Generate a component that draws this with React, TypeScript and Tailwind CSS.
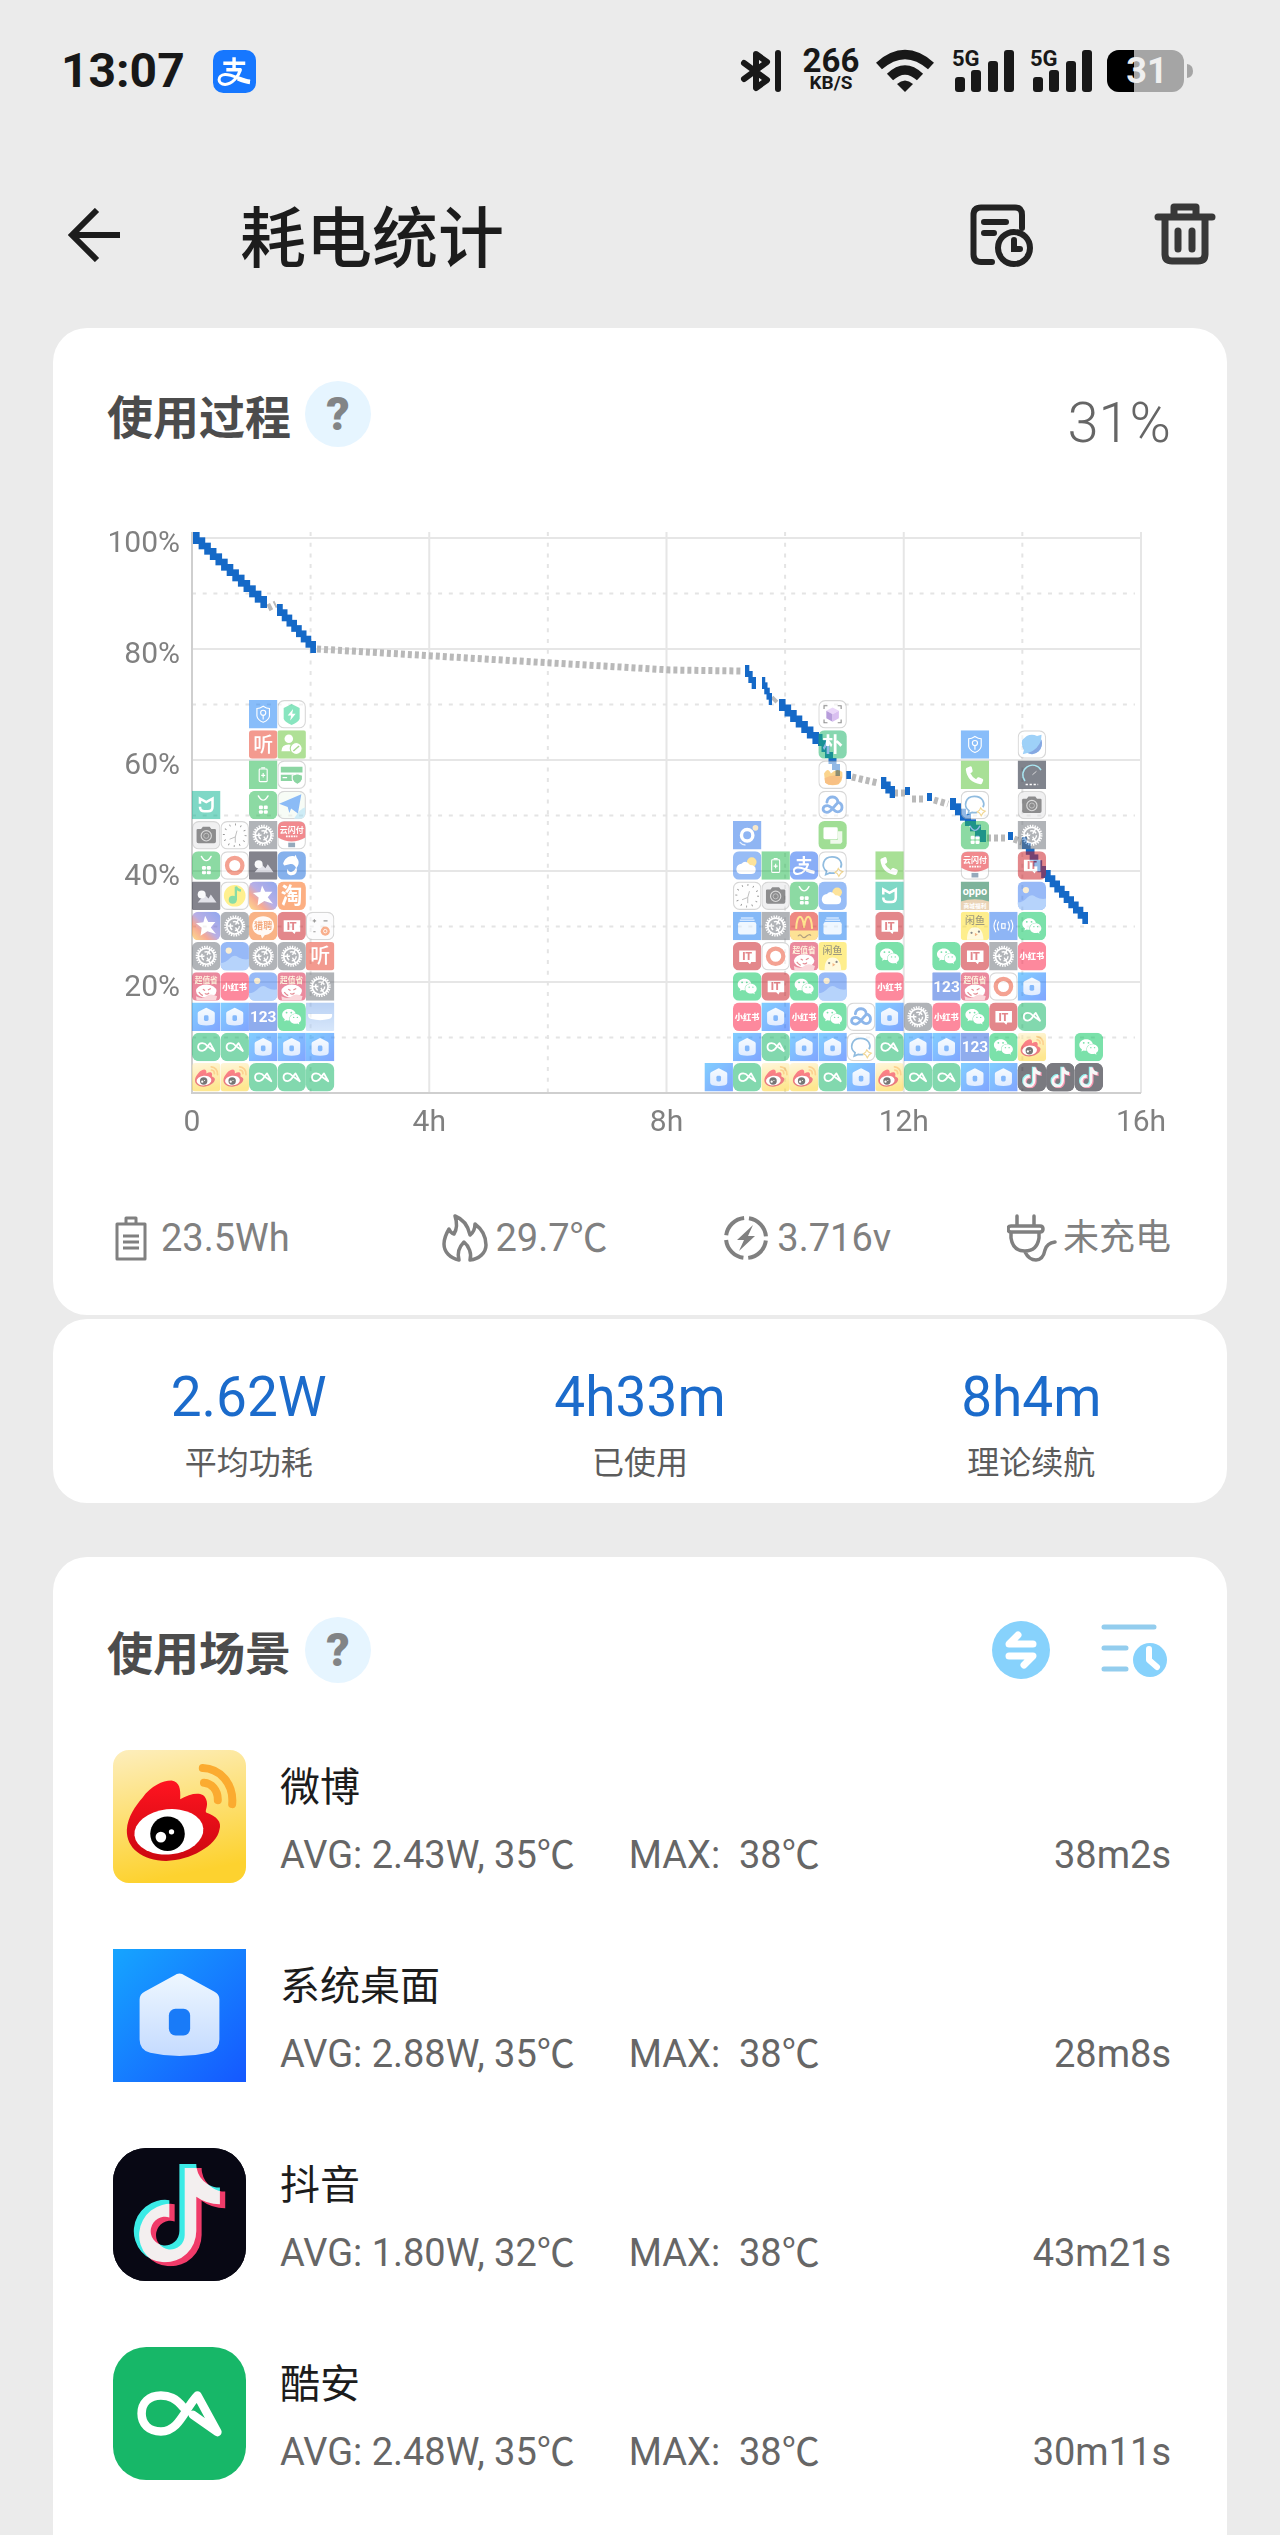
import React from "react";
import { FaTiktok, FaWeixin, FaPhone } from "react-icons/fa6";

const CJK = "'Noto Sans CJK SC', sans-serif";

/* ---------- App icons, all drawn in a 100 x 100 box ---------- */

type Box = { r?: number; fill: string; ring?: boolean; children?: React.ReactNode };

function Tile({ r = 22, fill, ring, children }: Box) {
  return (
    <>
      <rect x={ring ? 2 : 0} y={ring ? 2 : 0} width={ring ? 96 : 100} height={ring ? 96 : 100} rx={r} fill={fill} stroke={ring ? "#b4b4b4" : "none"} strokeWidth={ring ? 4 : 0} />
      {children}
    </>
  );
}

function Word({ t, size, y, x = 50, fill = "#fff", weight = 700 }: { t: string; size: number; y: number; x?: number; fill?: string; weight?: number }) {
  return (
    <text x={x} y={y} fontSize={size} fontWeight={weight} fill={fill} textAnchor="middle" fontFamily={"Roboto, " + CJK}>
      {t}
    </text>
  );
}

function Gear({ r }: { r: number }) {
  return (
    <Tile fill="#6f747c" r={r}>
      <circle cx="50" cy="50" r="33" fill="none" stroke="#fff" strokeWidth="8" strokeDasharray="4.6 4.04" />
      <circle cx="50" cy="50" r="28" fill="none" stroke="#fff" strokeWidth="6" />
      <circle cx="50" cy="50" r="16" fill="none" stroke="#fff" strokeWidth="5" strokeDasharray="24 9.5" />
      <path d="M50 50L64 74M50 50L22 50M50 50L64 26" stroke="#fff" strokeWidth="5" />
      <circle cx="50" cy="50" r="6" fill="#6f747c" />
    </Tile>
  );
}

function AlipayGlyph() {
  return (
    <g fill="none" stroke="#fff" strokeWidth="8">
      <path d="M24 31H75M49 17V46M31 46H66" />
      <path d="M64 44C60 62 44 80 28 80C10 80 9 58 28 57C46 56 62 70 86 74" strokeWidth="7" />
      <path d="M58 66C68 70 76 73 86 74" strokeWidth="11" />
    </g>
  );
}

function BatteryGlyph() {
  return (
    <g fill="none" stroke="#fff" strokeWidth="4">
      <rect x="36" y="30" width="28" height="44" rx="3" />
      <path d="M43 26H57M50 44V60M43 52H57" />
    </g>
  );
}

const ICONS: Record<string, React.ReactNode> = {
  weibo: (
    <Tile fill="url(#gWeibo)" r={12}>
      <path d="M10.4 60C11 50 17 42 22 36C29 27 37 23 44 23C50 24 51 29 50.5 37C59 32 68 31 70 37C72 42 69 45 70 47C78 50 82 54 80 60C78 72 58 83 40 83.4C22 83 10 74 10.4 60Z" fill="url(#gRed)" />
      <ellipse cx="42" cy="61.5" rx="26" ry="17" fill="#fff" transform="rotate(-6 42 61.5)" />
      <circle cx="41" cy="63" r="13" fill="#000" />
      <circle cx="36" cy="65.500" r="4" fill="#fff" />
      <circle cx="44" cy="61.500" r="2" fill="#fff" />
      <path d="M67.500 13.600C80 14 91 25 89.600 40.700M68.400 24.600C74 25 79 30 78.800 37.700" fill="none" stroke="#fbab30" strokeWidth="6" strokeLinecap="round" />
    </Tile>
  ),
  home: (
    <Tile fill="url(#gHome)" r={0}>
      <path d="M46 20Q50 17 54 20L76 32Q80 34 80 38V68Q80 76 72 78Q50 83 28 78Q20 76 20 68V38Q20 34 24 32Z" fill="url(#gHouse)" />
      <rect x="42" y="45" width="16" height="20" rx="5" fill="#197bf8" />
    </Tile>
  ),
  tiktok: (
    <Tile fill="#080814" r={25}>
      <g className="isolate">
        <rect width="100" height="100" rx="25" fill="#080814" />
        <FaTiktok x="11" y="12" size="74" color="#35eae4" className="mix-blend-screen" />
        <FaTiktok x="15" y="15" size="74" color="#f0355c" className="mix-blend-screen" />
      </g>
    </Tile>
  ),
  ca: (
    <Tile fill="#17b768" r={25}>
      <path d="M53 45.500C47 38 42 36.500 36 36.500C27 36.500 21.500 42 21.500 50C21.500 58 27 63.500 36 63.500C50 63.500 54 46 63.500 36.500L78.500 64L60 51" fill="none" stroke="#fff" strokeWidth="6.400" strokeLinecap="round" strokeLinejoin="round" />
    </Tile>
  ),
  promo: (
    <Tile fill="#d8264c" r={16}>
      <Word t="超值省" size={27} y={37} fill="#ffe9c0" />
      <ellipse cx="50" cy="66" rx="36" ry="23" fill="#fff" />
      <path d="M14 84Q36 96 50 84T88 84L84 98H16Z" fill="#f6b5bd" />
      <path d="M38 60L46 64M56 62L66 57M45 74Q53 80 60 72M24 70Q30 78 38 82" stroke="#c23" strokeWidth="4" fill="none" />
    </Tile>
  ),
  gear: <Gear r={20} />,
  gearSq: <Gear r={0} />,
  star: (
    <Tile fill="url(#gStar)">
      <path d="M46 14L57 36L82 36L66 55L84 78L54 68L30 84L34 56L14 40L40 37Z" fill="#fff" />
    </Tile>
  ),
  mountain: (
    <Tile fill="#1a1a2c" r={4}>
      <path d="M20 74L44 46L58 60L66 46L86 74Z" fill="#c9c9d6" />
      <circle cx="34" cy="46" r="14" fill="#f5f5f8" />
    </Tile>
  ),
  store: (
    <Tile fill="#29bb55">
      <path d="M33 18Q50 48 67 18" fill="none" stroke="#fff" strokeWidth="5" strokeLinecap="round" />
      <g fill="#fff">
        <rect x="35" y="52" width="14" height="13" rx="4" />
        <rect x="52" y="52" width="14" height="13" rx="4" />
        <rect x="35" y="68" width="14" height="13" rx="4" />
        <rect x="52" y="68" width="14" height="13" rx="4" />
      </g>
    </Tile>
  ),
  camera: (
    <Tile fill="#e4e4e6" ring>
      <path d="M16 32Q16 28 20 28H32L38 20H62L68 28H80Q84 28 84 32V72Q84 78 78 78H22Q16 78 16 72Z" fill="#2b2b2e" />
      <circle cx="50" cy="52" r="18" fill="none" stroke="#bbb" strokeWidth="4" />
      <circle cx="50" cy="52" r="9" fill="none" stroke="#999" strokeWidth="3" />
    </Tile>
  ),
  mi: (
    <Tile fill="#12b795" r={0}>
      <path d="M28 46V28L50 40L72 28V56Q72 72 56 72H44Q28 72 28 56" fill="none" stroke="#fff" strokeWidth="9" />
    </Tile>
  ),
  xhs: (
    <Tile fill="#fb2449">
      <Word t="小红书" size={29} y={61} weight={900} />
    </Tile>
  ),
  gallery: (
    <Tile fill="#3f7df0">
      <path d="M0 74Q18 74 34 56Q50 42 64 54Q82 64 100 60V80Q98 100 78 100H22Q2 100 0 78Z" fill="#78aef8" />
      <circle cx="29" cy="30" r="11" fill="#f5dfae" />
    </Tile>
  ),
  music: (
    <Tile fill="#fbfbfb" ring>
      <circle cx="50" cy="50" r="38" fill="#ffe32e" />
      <circle cx="43" cy="64" r="14" fill="#22c05c" />
      <path d="M54 66V18Q58 30 72 32" stroke="#22c05c" strokeWidth="8" fill="none" />
    </Tile>
  ),
  ring: (
    <Tile fill="#fff" ring>
      <circle cx="50" cy="50" r="27" fill="none" stroke="#ea5335" strokeWidth="15" />
    </Tile>
  ),
  clock: (
    <Tile fill="#fdfdfd" ring>
      <circle cx="50" cy="50" r="38" fill="none" stroke="#333" strokeWidth="7" strokeDasharray="3 16.900" />
      <path d="M58 34L52 56V76M52 56L32 64" fill="none" stroke="#777" strokeWidth="3" />
    </Tile>
  ),
  boss: (
    <Tile fill="#f4731f">
      <path d="M50 16C72 16 88 30 88 50C88 68 74 80 56 82L46 94L42 82C24 80 12 68 12 50C12 30 28 16 50 16Z" fill="#fff6ee" />
      <Word t="猎聘" size={32} y={61} fill="#ee6a1c" />
    </Tile>
  ),
  battery: (
    <Tile fill="#27ba52" r={0}>
      <BatteryGlyph />
    </Tile>
  ),
  listen: (
    <Tile fill="#e8432f" r={12}>
      <Word t="听" size={70} y={75} weight={500} />
    </Tile>
  ),
  shield: (
    <Tile fill="#2385f6" r={0}>
      <path d="M50 22Q62 30 72 30V56Q70 70 50 78Q30 70 28 56V30Q38 30 50 22Z" fill="none" stroke="#fff" strokeWidth="4" />
      <circle cx="50" cy="45" r="9" fill="none" stroke="#fff" strokeWidth="4" />
      <path d="M50 54V68" stroke="#fff" strokeWidth="4" />
    </Tile>
  ),
  wechat: (
    <Tile fill="#0ac762">
      <FaWeixin x="15" y="15" size="70" color="#fff" />
    </Tile>
  ),
  it: (
    <Tile fill="#cb2028">
      <path d="M22 30H80V70H64L60 78L52 70H22Z" fill="#fff" />
      <Word t="IT" size={38} y={64} fill="#cb2028" weight={900} />
    </Tile>
  ),
  taobao: (
    <Tile fill="#fa6b18">
      <Word t="淘" size={76} y={77} />
    </Tile>
  ),
  dolphin: (
    <Tile fill="#1f6fdc">
      <path d="M20 44C24 24 44 12 60 18L64 12L68 24C78 34 76 50 66 60C62 48 52 42 42 46L24 50Z" fill="#fff" />
      <path d="M66 56C74 72 62 84 50 84C36 84 30 74 36 62C38 74 52 76 60 66Z" fill="#fff" />
    </Tile>
  ),
  pay: (
    <Tile fill="#fff" ring>
      <path d="M2 24Q2 2 24 2H76Q98 2 98 24V58Q50 86 2 58Z" fill="#e5252d" />
      <Word t="云闪付" size={28} y={41} />
      <path d="M30 54H70" stroke="#fff" strokeWidth="6" strokeDasharray="6 3" />
      <rect x="38" y="76" width="24" height="16" fill="#3a5f80" />
    </Tile>
  ),
  plane: (
    <Tile fill="#f1f9ef" ring>
      <path d="M58 98Q80 62 98 58V76Q98 98 78 98Z" fill="#a5dcef" />
      <path d="M6 46L84 12L72 80L48 62L42 78L36 57Z" fill="#2880ee" />
    </Tile>
  ),
  card: (
    <Tile fill="#fff" ring>
      <path d="M12 22H88V42H12ZM12 50H60V72H12Z" fill="#27b152" />
      <path d="M18 60H34" stroke="#fff" strokeWidth="4" />
      <path d="M70 46L88 52V66Q84 78 70 84Q56 78 52 66V52Z" fill="#27b152" stroke="#fff" strokeWidth="4" />
    </Tile>
  ),
  person: (
    <Tile fill="#6bc53c" r={8}>
      <circle cx="40" cy="30" r="15" fill="#fff" />
      <path d="M14 74Q14 50 40 50Q60 50 62 74Z" fill="#fff" />
      <circle cx="66" cy="64" r="21" fill="#fff" stroke="#6bc53c" strokeWidth="4" />
      <path d="M56 73L76 55" stroke="#5ab52c" strokeWidth="5" />
    </Tile>
  ),
  bolt: (
    <Tile fill="#fff" ring>
      <path d="M50 14L78 28V66Q74 78 50 88Q26 78 22 66V28Z" fill="#22cf88" />
      <path d="M55 32L36 54H48L45 72L64 48H52Z" fill="#fff" />
    </Tile>
  ),
  water: (
    <Tile fill="url(#gWater)" r={4}>
      <path d="M8 40H92Q94 56 80 58Q50 66 20 58Q6 56 8 40Z" fill="#fff" />
    </Tile>
  ),
  calc: (
    <Tile fill="#fafafb" ring>
      <path d="M24 32H36M30 26V38M62 32H76M26 70H34" stroke="#444" strokeWidth="4" />
      <circle cx="68" cy="68" r="16" fill="#f26a2c" />
      <circle cx="68" cy="68" r="6" fill="none" stroke="#fff" strokeWidth="3" />
    </Tile>
  ),
  n123: (
    <Tile fill="#2f66dd" r={4}>
      <Word t="123" size={54} y={69} />
    </Tile>
  ),
  files: (
    <Tile fill="#1c7df0" r={0}>
      <path d="M28 22H72M24 30H76" stroke="#a9d0ff" strokeWidth="5" />
      <rect x="18" y="36" width="64" height="44" rx="8" fill="#e2f1ff" />
    </Tile>
  ),
  weather: (
    <Tile fill="#3e83ee">
      <circle cx="66" cy="38" r="17" fill="#fccb45" />
      <path d="M30 80Q12 80 12 62Q14 46 30 44Q44 28 60 48Q80 48 80 64Q80 80 64 80Z" fill="#fff" />
    </Tile>
  ),
  lens: (
    <Tile fill="#2f76e8" r={0}>
      <circle cx="50" cy="50" r="20" fill="none" stroke="#fff" strokeWidth="12" />
      <path d="M24 74Q32 84 44 84" stroke="#cfe2ff" strokeWidth="5" fill="none" />
      <circle cx="79" cy="24" r="10" fill="#f0d59b" />
    </Tile>
  ),
  mcd: (
    <Tile fill="#df2419">
      <path d="M0 66H100V78Q98 100 78 100H22Q2 100 0 78Z" fill="#fcc93a" />
      <path d="M22 60C24 4 46 4 50 56C54 4 76 4 78 60" fill="none" stroke="#ffcb2e" strokeWidth="7" />
      <path d="M28 86Q36 76 42 86T58 86T74 84" stroke="#6b4a10" strokeWidth="4" fill="none" />
    </Tile>
  ),
  alipay: (
    <Tile fill="#2668f0">
      <AlipayGlyph />
    </Tile>
  ),
  fish: (
    <Tile fill="#fde02c" r={12}>
      <Word t="闲鱼" size={35} y={42} fill="#4a4210" weight={500} />
      <path d="M22 98Q22 54 50 54Q78 54 80 98Z" fill="#fff6c2" />
      <path d="M50 74L60 80L50 86Z" fill="#e8761c" />
      <circle cx="38" cy="74" r="4" fill="#222" />
      <circle cx="64" cy="70" r="4" fill="#222" />
    </Tile>
  ),
  bubble: (
    <Tile fill="#fff" ring>
      <path d="M58 76Q48 78 40 76L26 82L29 70C8 54 16 20 48 20C78 20 86 44 78 58" fill="none" stroke="#3182c4" strokeWidth="6" />
      <path d="M70 60L76 68L86 72L78 78L72 88L66 78L58 74L66 68Z" fill="#fff" stroke="#e6b63c" strokeWidth="4" />
    </Tile>
  ),
  messages: (
    <Tile fill="#4fc13b">
      <rect x="18" y="22" width="50" height="42" rx="5" fill="#fff" />
      <path d="M68 36H84V74L78 80H42V66H68Z" fill="#dff4da" />
    </Tile>
  ),
  cloud: (
    <Tile fill="#fff" ring>
      <path d="M30 40C32 14 70 18 68 40C90 46 86 74 68 74C54 74 46 52 32 52C12 52 12 76 30 76C44 76 48 62 68 42" fill="none" stroke="#2c78d8" strokeWidth="10" strokeLinecap="round" />
    </Tile>
  ),
  dune: (
    <Tile fill="#fff" ring>
      <path d="M20 46Q34 20 44 46Q64 24 84 40Q88 72 70 84Q40 92 24 78Z" fill="#f7b02c" />
      <path d="M22 62Q50 46 84 58L72 82Q40 92 24 78Z" fill="#f28a1a" />
    </Tile>
  ),
  pu: (
    <Tile fill="#1eb46a">
      <Word t="朴" size={72} y={76} />
    </Tile>
  ),
  cube: (
    <Tile fill="#fff" ring>
      <path d="M20 32V20H32M68 20H80V32M80 68V80H68M32 80H20V68" fill="none" stroke="#333" strokeWidth="4" />
      <path d="M50 26L72 38L50 50L28 38Z" fill="#d9b5f4" />
      <path d="M28 38L50 50V76L28 64Z" fill="#7a49bd" />
      <path d="M72 38L50 50V76L72 64Z" fill="#b888e4" />
    </Tile>
  ),
  phone: (
    <Tile fill="#5dc53c" r={0}>
      <g transform="translate(100 0) scale(-1 1)">
        <path d="M80 26L66 20Q62 20 61 24L58 36Q58 39 60 41L66 45Q60 58 46 66L41 60Q39 58 36 59L24 64Q20 66 21 70L25 80Q27 84 31 83Q76 78 82 32Q82 28 80 26Z" fill="#fff" />
      </g>
    </Tile>
  ),
  oppo: (
    <Tile fill="#107245" r={0}>
      <Word t="oppo" size={38} y={48} />
      <path d="M0 70Q50 54 100 70V100H0Z" fill="#d7ad77" />
      <Word t="商城福利" size={20} y={92} />
    </Tile>
  ),
  hotspot: (
    <Tile fill="#2d76ec" r={0}>
      <path d="M34 34Q24 50 34 66M66 34Q76 50 66 66M24 28Q10 50 24 72M76 28Q90 50 76 72" fill="none" stroke="#fff" strokeWidth="4" />
      <rect x="44" y="42" width="12" height="16" fill="none" stroke="#fff" strokeWidth="4" />
    </Tile>
  ),
  speed: (
    <Tile fill="#141a2c" r={0}>
      <path d="M26 72A34 34 0 1 1 82 34" fill="none" stroke="#5fd0e6" strokeWidth="5" />
      <path d="M52 50L66 38" stroke="#ccc" strokeWidth="3" />
      <path d="M28 84H72" stroke="#fff" strokeWidth="5" strokeDasharray="8 6" />
    </Tile>
  ),
  browser: (
    <Tile fill="#fff" ring>
      <path d="M16 34L32 20Q50 12 68 20L84 16L82 34Q90 56 74 74Q56 90 34 80L18 84L22 70Q12 52 16 34Z" fill="#4ba9f3" />
      <path d="M84 32Q90 58 74 74Q56 90 36 80Q70 72 84 32Z" fill="#1f5ec9" />
    </Tile>
  ),
};

/* Apps used in each time slot, listed from the axis upwards. */
const COLUMNS: Record<number, string> = {
  0: "weibo ca home promo gear star mountain store camera mi",
  1: "weibo ca home xhs gallery gear music ring clock",
  2: "ca home n123 gallery gear boss star mountain gearSq store battery listen shield",
  3: "ca home wechat promo gear it taobao dolphin pay plane card person bolt",
  4: "ca home water gearSq listen calc",
  18: "home",
  19: "ca home xhs wechat it files clock weather lens",
  20: "weibo ca home it ring gearSq camera battery",
  21: "weibo home xhs wechat promo mcd store alipay",
  22: "ca home wechat gallery fish files weather bubble messages cloud dune pu cube",
  23: "home bubble cloud",
  24: "weibo ca home xhs wechat it mi phone",
  25: "ca home gear",
  26: "ca home xhs n123 wechat",
  27: "home n123 wechat promo it fish oppo pay store bubble phone shield",
  28: "home wechat it ring gearSq hotspot",
  29: "tiktok weibo ca home xhs wechat gallery it gearSq camera speed browser",
  30: "tiktok",
  31: "tiktok wechat",
};

const LEFT = 192;
const RIGHT = 1141;
const TOP = 538;
const BOTTOM = 1093;

const ACTIVE: number[][] = [
  [193, 538, 266, 602],
  [277, 610, 315, 647],
  [745, 671, 755, 683],
  [762, 683, 771, 699],
  [779, 705, 818, 738],
  [818, 740, 839, 770],
  [846, 777, 850, 777],
  [881, 783, 894, 792],
  [905, 793, 909, 793],
  [927, 799, 931, 799],
  [950, 804, 985, 836],
  [1008, 838, 1012, 838],
  [1022, 843, 1045, 872],
  [1045, 876, 1087, 918],
];

const IDLE = [
  "M268 608L276 604",
  "M317 649L670 670L742 671",
  "M773 701L777 697",
  "M852 777L878 783",
  "M894 793H905",
  "M912 799H926M934 800L948 804",
  "M987 838H1006M1014 839L1022 842",
];

function steps([x0, y0, x1, y1]: number[]) {
  const n = Math.max(1, Math.round((y1 - y0) / 5.55) + 1);
  const w = (x1 - x0) / n;
  return Array.from({ length: n }, (_, i) => ({
    x: x0 + i * w,
    y: (n > 1 ? y0 + ((y1 - y0) * i) / (n - 1) : y0) - 6,
    w: w + 1,
    h: y1 === y0 ? 8 : 12,
  }));
}

function UsageChart() {
  return (
    <svg viewBox="107 520 1066 620" className="mt-[73px] block h-auto w-full" role="img" aria-label="电量使用过程">
      <g stroke="#e6e6e6" strokeWidth="2">
        {[0, 1, 2, 3, 4].map((i) => (
          <path key={i} d={`M${LEFT} ${TOP + i * 111}H${RIGHT}`} />
        ))}
        {[1, 2, 3, 4].map((i) => (
          <path key={i} d={`M${LEFT + i * 237.25} 532V${BOTTOM}`} />
        ))}
      </g>
      <g stroke="#e4e4e4" strokeWidth="2" strokeDasharray="4 6.700">
        {[0, 1, 2, 3, 4].map((i) => (
          <path key={i} d={`M${LEFT} ${TOP + 55.5 + i * 111}H${RIGHT - 6}`} />
        ))}
        {[0, 1, 2, 3].map((i) => (
          <path key={i} d={`M${LEFT + 118.6 + i * 237.25} 532V${BOTTOM}`} />
        ))}
      </g>
      <path d={`M${LEFT} 532V${BOTTOM}H${RIGHT}`} fill="none" stroke="#cfcfcf" strokeWidth="2" />

      {IDLE.map((d) => (
        <path key={d} d={d} fill="none" stroke="#b9b9b9" strokeWidth="7" strokeDasharray="4 3" />
      ))}
      <g fill="#1569c7">
        {ACTIVE.flatMap(steps).map((s, i) => (
          <rect key={i} x={s.x} y={s.y} width={s.w} height={s.h} />
        ))}
      </g>

      <g opacity="0.54">
        {Object.entries(COLUMNS).flatMap(([col, names]) =>
          names.split(" ").map((name, row) => (
            <svg key={col + "-" + row} x={LEFT + Number(col) * 28.47} y={1063 - row * 30.25} width="28.500" height="28.500" viewBox="0 0 100 100">
              {ICONS[name]}
            </svg>
          ))
        )}
      </g>

      <g fill="#808080" fontSize="30" fontFamily="Roboto, sans-serif">
        {[100, 80, 60, 40, 20].map((v, i) => (
          <text key={v} x="180" y={552 + i * 111} textAnchor="end">
            {v}%
          </text>
        ))}
        {["0", "4h", "8h", "12h", "16h"].map((v, i) => (
          <text key={v} x={LEFT + i * 237.25} y="1131" textAnchor="middle">
            {v}
          </text>
        ))}
      </g>
    </svg>
  );
}

/* ---------- Page parts ---------- */

function GradientDefs() {
  return (
    <svg width="0" height="0" className="absolute" aria-hidden="true">
      <defs>
        <linearGradient id="gWeibo" x1="0" y1="0" x2="0.2" y2="1">
          <stop offset="0" stopColor="#fdeebd" />
          <stop offset="1" stopColor="#fdd22f" />
        </linearGradient>
        <linearGradient id="gRed" x1="0" y1="0" x2="0" y2="1">
          <stop offset="0" stopColor="#ff1420" />
          <stop offset="1" stopColor="#cc0810" />
        </linearGradient>
        <linearGradient id="gHome" x1="0" y1="0" x2="1" y2="1">
          <stop offset="0" stopColor="#16a5ff" />
          <stop offset="1" stopColor="#1558ff" />
        </linearGradient>
        <linearGradient id="gHouse" x1="0" y1="0" x2="0" y2="1">
          <stop offset="0" stopColor="#eef7ff" />
          <stop offset="1" stopColor="#c5dbff" />
        </linearGradient>
        <linearGradient id="gStar" x1="1" y1="0" x2="0" y2="1">
          <stop offset="0" stopColor="#2f5ce0" />
          <stop offset="0.5" stopColor="#7c6ad0" />
          <stop offset="0.7" stopColor="#f0603a" />
          <stop offset="1" stopColor="#fbc22c" />
        </linearGradient>
        <linearGradient id="gWater" x1="0" y1="0" x2="0" y2="1">
          <stop offset="0" stopColor="#7da9ea" />
          <stop offset="1" stopColor="#b5d2f7" />
        </linearGradient>
      </defs>
    </svg>
  );
}

function Signal() {
  return (
    <svg viewBox="0 -6 64 56" className="h-[56px] w-[64px]" fill="#181818" aria-hidden="true">
      <text x="1" y="17" fontSize="22" fontWeight="700" fontFamily="Roboto, sans-serif">
        5G
      </text>
      <rect x="4" y="28" width="10" height="15" rx="3" />
      <rect x="20" y="21" width="10" height="22" rx="3" />
      <rect x="37" y="12" width="10" height="31" rx="3" />
      <rect x="53" y="1" width="10" height="42" rx="3" />
    </svg>
  );
}

function StatusBar() {
  return (
    <div className="flex h-[142px] items-center pr-[86px] pl-[61px] text-[#181818]">
      <span className="text-[48px] leading-none font-bold">13:07</span>
      <svg viewBox="0 0 100 100" className="ml-[28px] size-[43px]" aria-label="支付宝">
        <rect width="100" height="100" rx="24" fill="#1677ff" />
        <AlipayGlyph />
      </svg>
      <div className="ml-auto flex items-center">
        <svg viewBox="0 0 41 44" className="h-[44px] w-[41px]" fill="none" stroke="#181818" strokeWidth="6" strokeLinecap="round" strokeLinejoin="round" aria-label="蓝牙">
          <path d="M4 14L27 31L16 39V5L27 13L4 30" />
          <path d="M38 4V40" />
        </svg>
        <div className="ml-[20px] flex w-[60px] flex-col items-center font-bold">
          <span className="text-[33px] leading-[24px]">266</span>
          <span className="text-[19px] leading-[20px]">KB/S</span>
        </div>
        <svg viewBox="0 0 60 44" className="ml-[14px] h-[44px] w-[60px]" fill="none" stroke="#181818" strokeWidth="9" aria-label="无线网络">
          <path d="M4 17Q30 -6 56 17" />
          <path d="M15 28Q30 14 45 28" />
          <path d="M30 43L22 35Q30 28 38 35Z" fill="#181818" stroke="none" />
        </svg>
        <div className="ml-[16px] flex gap-[14px]">
          <Signal />
          <Signal />
        </div>
        <svg viewBox="0 0 87 44" className="ml-[14px] h-[44px] w-[87px]" aria-label="电量 31">
          <clipPath id="cell">
            <rect x="0" y="1" width="77" height="42" rx="12" />
          </clipPath>
          <rect x="0" y="1" width="77" height="42" rx="12" fill="#a5a5a5" />
          <rect x="0" y="1" width="27" height="42" fill="#000" clipPath="url(#cell)" />
          <path d="M80 15Q86 16 86 22T80 29Z" fill="#a5a5a5" />
          <text x="40" y="34" fontSize="36" fontWeight="700" fill="#efefef" textAnchor="middle" fontFamily="Roboto, sans-serif">
            31
          </text>
        </svg>
      </div>
    </div>
  );
}

function TitleBar() {
  return (
    <header className="flex h-[186px] items-start pr-[64px] pl-[67px] text-[#1c1c1c]">
      <button type="button" aria-label="返回" className="mt-[66px]">
        <svg viewBox="0 0 54 54" className="size-[54px]" fill="none" stroke="currentColor" strokeWidth="6">
          <path d="M30 2L5 27L30 52M5 27H53" />
        </svg>
      </button>
      <h1 className="mt-[62px] ml-[119px] text-[66px] leading-[72px] font-medium">耗电统计</h1>
      <button type="button" aria-label="历史记录" className="mt-[62px] ml-auto">
        <svg viewBox="0 0 64 64" className="size-[64px]" fill="none" stroke="#222" strokeWidth="6" strokeLinecap="round">
          <path d="M52 24V11Q52 3.500 45 3.500H11Q3.500 3.500 3.500 11V50Q3.500 58 11 58H22" />
          <path d="M14 18H36M14 29H24" />
          <circle cx="44" cy="44" r="16" />
          <path d="M44 36V45H50" />
        </svg>
      </button>
      <button type="button" aria-label="删除" className="mt-[61px] ml-[120px]">
        <svg viewBox="0 0 62 62" className="size-[62px]" fill="none" stroke="#383838" strokeWidth="7" strokeLinecap="round" strokeLinejoin="round">
          <path d="M4 14H58M20 13V4H42V13" />
          <path d="M11 15V51Q11 58 18 58H44Q51 58 51 51V15M24 28V46M38 28V46" />
        </svg>
      </button>
    </header>
  );
}

function SectionTitle({ text }: { text: string }) {
  return (
    <div className="flex items-center">
      <h2 className="pt-2 text-[46px] leading-[58px] font-bold text-[#4c4c4c]">{text}</h2>
      <button type="button" aria-label={text + "说明"} className="ml-[14px] flex size-[66px] items-center justify-center rounded-full bg-[#e6f5ff] text-[46px] leading-none font-black text-[#828486]">
        ?
      </button>
    </div>
  );
}

function Readings() {
  const icon = "h-[48px] shrink-0";
  return (
    <ul className="mt-[74px] flex items-center justify-between pr-[2px] pl-[8px] text-[38px] leading-[48px] text-[#808080]">
      <li className="flex items-center gap-[14px] pr-9">
        <svg viewBox="0 0 32 48" className={icon + " w-[32px]"} fill="none" stroke="currentColor" strokeWidth="3" strokeLinejoin="round">
          <path d="M2 10H30V45H2ZM11 10V4H21V10M8 22H24M8 28H24M8 34H24" />
        </svg>
        23.5Wh
      </li>
      <li className="flex items-center gap-[8px]">
        <svg viewBox="0 0 46 48" className={icon + " w-[46px]"} fill="none" stroke="currentColor" strokeWidth="3.500" strokeLinejoin="round">
          <path d="M13 2C21 5 26 11 28 21C32 18 33 14 33 10C41 16 44 24 44 31C44 39 37 45 28 46C30 40 27 32 22 28C17 33 15 39 17 46C8 44 2 38 2 30C2 24 4 20 7 15C8 18 9 19 12 20C15 15 15 8 13 2Z" />
        </svg>
        29.7℃
      </li>
      <li className="flex items-center gap-[8px]">
        <svg viewBox="0 0 46 48" className={icon + " w-[46px]"} fill="none" stroke="currentColor" strokeWidth="4">
          <circle cx="23" cy="24" r="20" strokeDasharray="26.400 5" strokeDashoffset="-2.500" />
          <path d="M30 11L14 26H21L16 37L32 22H25Z" fill="currentColor" stroke="none" />
        </svg>
        3.716v
      </li>
      <li className="flex items-center gap-[6px]">
        <svg viewBox="0 0 50 48" className={icon + " w-[50px]"} fill="none" stroke="currentColor" strokeWidth="3.500" strokeLinecap="round">
          <path d="M10 2V12M27 2V12M4 12H33Q36 12 36 15T33 18H4Q1 18 1 15T4 12Z" />
          <path d="M4 19V24Q6 37 18 37T32 24V19M18 38Q22 46 29 46Q36 46 38 36Q40 29 48 28" />
        </svg>
        <span className="text-[36px]">未充电</span>
      </li>
    </ul>
  );
}

const TOTALS = [
  ["2.62W", "平均功耗"],
  ["4h33m", "已使用"],
  ["8h4m", "理论续航"],
];

const SCENES = [
  { icon: "weibo", name: "微博", avg: "AVG: 2.43W, 35℃", time: "38m2s" },
  { icon: "home", name: "系统桌面", avg: "AVG: 2.88W, 35℃", time: "28m8s" },
  { icon: "tiktok", name: "抖音", avg: "AVG: 1.80W, 32℃", time: "43m21s" },
  { icon: "ca", name: "酷安", avg: "AVG: 2.48W, 35℃", time: "30m11s" },
];

export default function App() {
  return (
    <div className="flex min-h-screen flex-col bg-[#ebebeb] font-[Roboto,'Noto_Sans_CJK_SC',sans-serif]">
      <GradientDefs />
      <StatusBar />
      <TitleBar />
      <main className="flex flex-1 flex-col px-[53px]">
        <section className="rounded-[34px] bg-white px-[54px] py-[53px]">
          <div className="flex items-end justify-between pr-[2px]">
            <SectionTitle text="使用过程" />
            <span className="text-[56px] leading-[48px] font-light text-[#666]">31%</span>
          </div>
          <UsageChart />
          <Readings />
        </section>

        <section className="mt-[4px] grid grid-cols-3 rounded-[34px] bg-white pt-[48px] pb-[18px] text-center">
          {TOTALS.map(([value, label]) => (
            <div key={label}>
              <div className="text-[55px] leading-[60px] text-[#1b6bcb]">{value}</div>
              <div className="mt-[14px] text-[32px] leading-[44px] text-[#5c5c5c]">{label}</div>
            </div>
          ))}
        </section>

        <section className="mt-[54px] flex-1 rounded-t-[34px] bg-white px-[54px] pt-[60px] pb-[54px]">
          <div className="flex items-center justify-between pr-[6px]">
            <SectionTitle text="使用场景" />
            <div className="flex items-center gap-[50px]">
              <button type="button" aria-label="切换">
                <svg viewBox="0 0 58 58" className="size-[58px]" fill="none" stroke="#fff" strokeWidth="7" strokeLinecap="round" strokeLinejoin="round">
                  <circle cx="29" cy="29" r="29" fill="#87d2fc" stroke="none" />
                  <path d="M41 23H17L26 14M17 35H41L32 44" />
                </svg>
              </button>
              <button type="button" aria-label="按时间排序">
                <svg viewBox="0 0 67 58" className="h-[58px] w-[67px]" fill="none" stroke="#93cdee" strokeWidth="5" strokeLinecap="round" strokeLinejoin="round">
                  <path d="M4 6H54M4 27H26M4 48H26" />
                  <circle cx="50" cy="39" r="17" fill="#87d2fc" stroke="none" />
                  <path d="M49 28V39L57 46" stroke="#fff" strokeWidth="6" />
                </svg>
              </button>
            </div>
          </div>
          <ul className="mt-[67px] flex flex-col gap-[66px] pr-[2px] pl-[6px]">
            {SCENES.map((s) => (
              <li key={s.name} className="flex items-center">
                <svg viewBox="0 0 100 100" className="size-[133px] shrink-0" aria-hidden="true">
                  {ICONS[s.icon]}
                </svg>
                <div className="ml-[34px] flex-1 pt-1">
                  <div className="text-[40px] leading-[60px] text-[#1c1c1c]">{s.name}</div>
                  <div className="mt-[12px] flex text-[38px] leading-[50px] text-[#666]">
                    <span>{s.avg}</span>
                    <span className="ml-[54px] whitespace-pre">MAX:  38℃</span>
                    <span className="ml-auto">{s.time}</span>
                  </div>
                </div>
              </li>
            ))}
          </ul>
        </section>
      </main>
    </div>
  );
}
